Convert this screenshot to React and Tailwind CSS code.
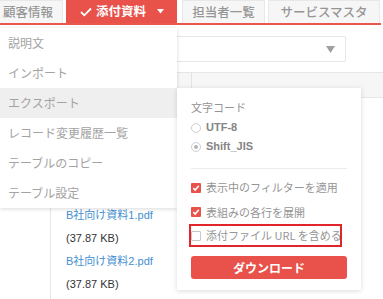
import React from "react";

const F = { fontFamily: '"Noto Sans CJK JP", "Noto Sans", sans-serif' };

function Check({ on }) {
  if (on)
    return (
      <span className="w-[10px] h-[10px] rounded-[1px] bg-[#e8504a] flex items-center justify-center shrink-0">
        <svg width="8" height="8" viewBox="0 0 8 8">
          <polyline points="1.3,4.2 3.2,6 6.8,1.8" fill="none" stroke="#fff" strokeWidth="1.6" />
        </svg>
      </span>
    );
  return <span className="w-[10px] h-[10px] rounded-[1px] border border-[#c8c8c8] bg-white shrink-0" />;
}

function Radio({ on }) {
  return (
    <span className="w-[10px] h-[10px] rounded-full border border-[#cfcfcf] bg-white flex items-center justify-center shrink-0">
      {on && <span className="w-[4px] h-[4px] rounded-full bg-[#b5b5b5]" />}
    </span>
  );
}

export default function App() {
  const menu = ["説明文", "インポート", "エクスポート", "レコード変更履歴一覧", "テーブルのコピー", "テーブル設定"];
  return (
    <div className="relative w-[383px] h-[299px] overflow-hidden bg-white" style={F}>
      {/* Tabs */}
      <div className="flex h-[23px] text-[12.5px] font-medium">
        <div className="ml-[-9px] w-[72px] flex items-center pl-[11px] bg-[#f6f6f6] border border-b-0 border-[#e8e8e8] text-[#969696]">顧客情報</div>
        <div className="ml-[3px] w-[111px] flex items-center pl-[14px] bg-[#e8524a] text-white font-bold">
          <svg width="12" height="10" viewBox="0 0 12 10" className="shrink-0">
            <polyline points="1,5 4.3,8.3 11,1.5" fill="none" stroke="#fff" strokeWidth="1.8" />
          </svg>
          <span className="ml-[4px]">添付資料</span>
          <svg width="7" height="5" viewBox="0 0 7 5" className="ml-[11px]">
            <polygon points="0,0 7,0 3.5,4.5" fill="#fff" />
          </svg>
        </div>
        <div className="ml-[5px] w-[83px] flex items-center justify-center bg-[#f6f6f6] border border-b-0 border-[#e8e8e8] text-[#969696]">担当者一覧</div>
        <div className="ml-[3px] w-[112px] flex items-center justify-center bg-[#f6f6f6] border border-b-0 border-[#e8e8e8] text-[#969696]">サービスマスタ</div>
      </div>
      <div className="h-[2px] w-[381px] bg-[#e9574f]" />

      {/* Background content */}
      <div className="mt-[11px] ml-[60px] w-[286px] h-[26px] border border-[#e6e6e6] rounded-[2px] flex items-center justify-end pr-[10px]">
        <svg width="9" height="7" viewBox="0 0 9 7">
          <polygon points="0,0 9,0 4.5,7" fill="#a0a0a0" />
        </svg>
      </div>
      <div className="mt-[10px] ml-[50px] h-[26px] bg-[#f6f6f6] border-y border-[#e6e6e6] flex">
        <div className="w-[142px] border-r border-[#e3e3e3]" />
        <div className="flex-1" />
      </div>
      <div className="flex">
        <div className="w-[51px] h-[201px] border-r border-[#e6e6e6]" />
        <div className="pl-[15px] pt-[106px] text-[11px] leading-[23px]" style={{ fontFamily: '"Liberation Sans", "Noto Sans CJK JP", sans-serif' }}>
          <div className="text-[#3f8fd2]">B社向け資料1.pdf</div>
          <div className="text-[#333]">(37.87 KB)</div>
          <div className="text-[#3f8fd2]">B社向け資料2.pdf</div>
          <div className="text-[#333]">(37.87 KB)</div>
        </div>
      </div>

      {/* Dropdown menu */}
      <div className="absolute left-0 top-[28px] w-[177px] bg-white shadow-[0_1px_4px_rgba(0,0,0,0.15)] text-[12px] text-[#a3a3a3]">
        {menu.map((m, i) => (
          <div key={m} className={`h-[30px] flex items-center pl-[8px] ${i === 2 ? "bg-[#efefef]" : ""}`}>{m}</div>
        ))}
      </div>

      {/* Export submenu */}
      <div className="absolute left-[177px] top-[88px] w-[184px] h-[202px] bg-white shadow-[0_1px_5px_rgba(0,0,0,0.15)] pl-[14px] pt-[11px] text-[11px] text-[#959595]">
        <div className="h-[16px] flex items-center">文字コード</div>
        <div className="mt-[3px] h-[19px] flex items-center gap-[5px]">
          <Radio />
          <span className="font-bold text-[#858585]" style={{ fontFamily: '"Liberation Sans", sans-serif' }}>UTF-8</span>
        </div>
        <div className="h-[19px] flex items-center gap-[5px]">
          <Radio on />
          <span className="font-bold text-[#858585]" style={{ fontFamily: '"Liberation Sans", sans-serif' }}>Shift_JIS</span>
        </div>
        <div className="mt-[12px] w-[156px] h-px bg-[#ececec]" />
        <div className="mt-[6px] h-[25px] flex items-center gap-[5px]">
          <Check on />
          <span>表示中のフィルターを適用</span>
        </div>
        <div className="h-[24px] flex items-center gap-[5px]">
          <Check on />
          <span>表組みの各行を展開</span>
        </div>
        <div className="ml-[-2px] w-[153px] h-[23px] border-2 border-[#e0262b] flex items-center gap-[5px]">
          <Check />
          <span className="whitespace-nowrap">添付ファイル URL を含める</span>
        </div>
        <div className="mt-[9px] w-[156px] h-[23px] rounded-[3px] bg-[#e8524a] text-white font-bold text-[12px] flex items-center justify-center">
          ダウンロード
        </div>
      </div>
    </div>
  );
}
